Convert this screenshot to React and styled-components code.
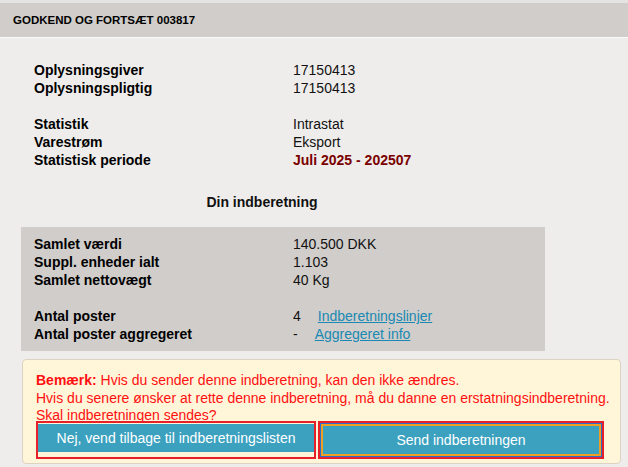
import React from "react";
import styled, { createGlobalStyle } from "styled-components";

const GlobalStyle = createGlobalStyle`
  html, body {
    margin: 0;
    padding: 0;
    background: #efedeb;
  }
  body {
    font-family: "Liberation Sans", Arial, sans-serif;
    font-size: 14px;
    color: #111;
  }
`;

const Page = styled.div`
  width: 628px;
  min-height: 467px;
  background: #efedeb;
  border-top: 3px solid #e6e4e2;
`;

const Header = styled.div`
  height: 34px;
  display: flex;
  align-items: center;
  padding-left: 13px;
  background: #d0cdca;
  border-bottom: 1px solid #fbfaf9;
  font-size: 11.5px;
  font-weight: bold;
  color: #000;
`;

const Content = styled.div`
  padding: 23px 0 0 0;
`;

const InfoTable = styled.div`
  display: grid;
  grid-template-columns: 259px 1fr;
  padding-left: ${(p) => p.$indent || 34}px;
  line-height: 18px;
`;

const Label = styled.div`
  font-weight: bold;
  color: #000;
`;

const Value = styled.div`
  color: ${(p) => (p.$dark ? "#7a0000" : "#111")};
  font-weight: ${(p) => (p.$dark ? "bold" : "normal")};
`;

const Spacer = styled.div`
  grid-column: 1 / span 2;
  height: 18px;
`;

const SectionTitle = styled.div`
  width: 524px;
  margin-top: 24px;
  text-align: center;
  font-weight: bold;
  line-height: 18px;
`;

const SummaryBox = styled.div`
  width: 524px;
  margin: 16px 0 0 21px;
  padding: 8px 0;
  background: #d0cdca;
`;

const Link = styled.a`
  margin-left: 17px;
  color: #1a89b3;
  text-decoration: underline;
  cursor: pointer;
`;

const Note = styled.div`
  width: 584px;
  margin: 8px 0 0 22px;
  padding: 12px 0 4px 13px;
  background: #fff5d9;
  border: 1px solid #ddd3c3;
  border-radius: 4px;
  color: #ff1010;
  line-height: 17.5px;
  white-space: nowrap;
`;

const Strong = styled.b`
  font-weight: bold;
`;

const Buttons = styled.div`
  display: flex;
  gap: 2px;
  margin-top: -4px;
`;

const Frame = styled.div`
  border: 2px solid #e8202a;
  padding: ${(p) => (p.$focus ? "1px 0 1px 0" : "1px 0 5px 0")};
  width: ${(p) => p.$w}px;
  box-sizing: border-box;
  display: flex;
  justify-content: center;
`;

const Button = styled.button`
  width: ${(p) => p.$w}px;
  height: ${(p) => (p.$focus ? 32 : 28)}px;
  background: #3ba1bf;
  color: #fff;
  font-family: "Liberation Sans", Arial, sans-serif;
  font-size: 14px;
  border: ${(p) => (p.$focus ? "2px solid #f0a020" : "none")};
  box-shadow: ${(p) => (p.$focus ? "0 0 0 1px #2a6fd0" : "none")};
  cursor: pointer;
  padding: 0;
`;

export default function App() {
  return (
    <>
      <GlobalStyle />
      <Page>
        <Header>GODKEND OG FORTSÆT 003817</Header>
        <Content>
          <InfoTable>
            <Label>Oplysningsgiver</Label>
            <Value>17150413</Value>
            <Label>Oplysningspligtig</Label>
            <Value>17150413</Value>
            <Spacer />
            <Label>Statistik</Label>
            <Value>Intrastat</Value>
            <Label>Varestrøm</Label>
            <Value>Eksport</Value>
            <Label>Statistisk periode</Label>
            <Value $dark>Juli 2025 - 202507</Value>
          </InfoTable>

          <SectionTitle>Din indberetning</SectionTitle>

          <SummaryBox>
            <InfoTable $indent={13}>
              <Label>Samlet værdi</Label>
              <Value>140.500 DKK</Value>
              <Label>Suppl. enheder ialt</Label>
              <Value>1.103</Value>
              <Label>Samlet nettovægt</Label>
              <Value>40 Kg</Value>
              <Spacer />
              <Label>Antal poster</Label>
              <Value>
                4<Link>Indberetningslinjer</Link>
              </Value>
              <Label>Antal poster aggregeret</Label>
              <Value>
                -<Link>Aggregeret info</Link>
              </Value>
            </InfoTable>
          </SummaryBox>

          <Note>
            <div>
              <Strong>Bemærk:</Strong> Hvis du sender denne indberetning, kan den ikke ændres.
            </div>
            <div>
              Hvis du senere ønsker at rette denne indberetning, må du danne en erstatningsindberetning.
            </div>
            <div>Skal indberetningen sendes?</div>
            <Buttons>
              <Frame $w={280}>
                <Button $w={276}>Nej, vend tilbage til indberetningslisten</Button>
              </Frame>
              <Frame $w={286} $focus>
                <Button $w={280} $focus>
                  Send indberetningen
                </Button>
              </Frame>
            </Buttons>
          </Note>
        </Content>
      </Page>
    </>
  );
}
